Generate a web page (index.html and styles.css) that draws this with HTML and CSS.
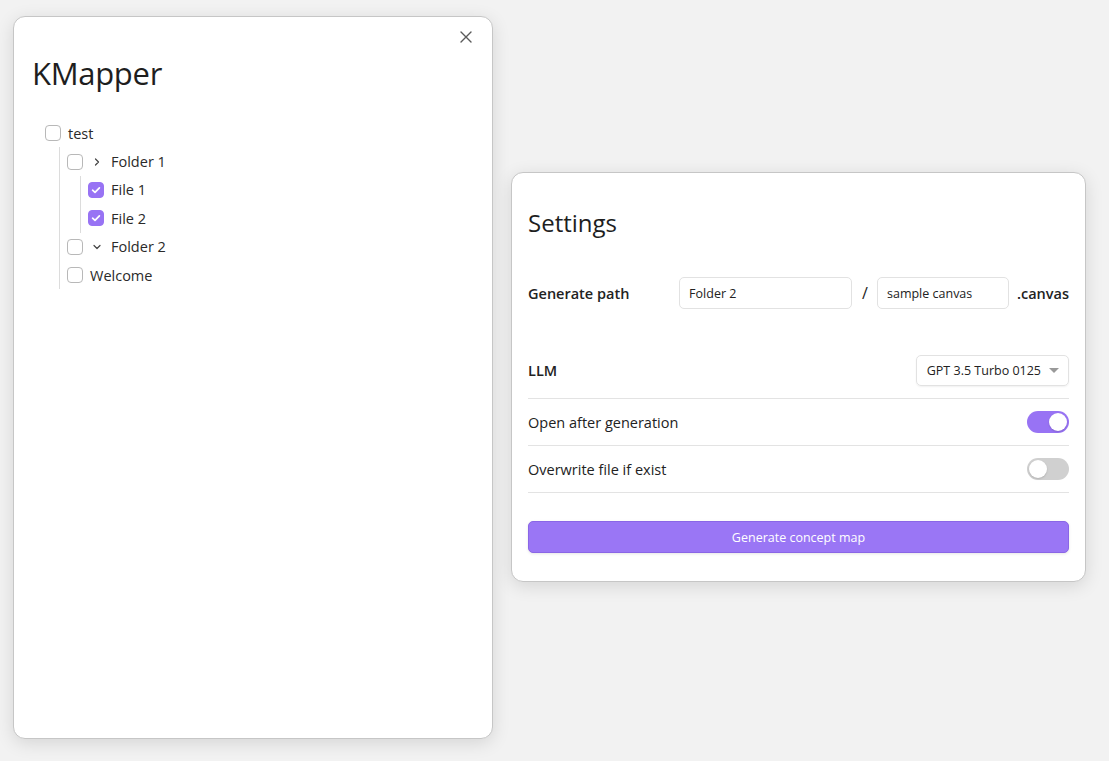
FILE: index.html
```
<!DOCTYPE html>
<html>
<head>
<meta charset="utf-8">
<title>KMapper</title>
<link rel="stylesheet" href="styles.css">
</head>
<body>
<div class="desk">
  <section class="modal modal-tree">
    <button class="close" aria-label="Close">
      <svg width="14" height="14" viewBox="0 0 14 14"><path d="M2 2 L12 12 M12 2 L2 12" stroke="#5a5a5a" stroke-width="1.4" fill="none" stroke-linecap="round"/></svg>
    </button>
    <h1 class="title">KMapper</h1>
    <div class="tree">
      <div class="row"><span class="cb"></span><span class="label">test</span></div>
      <div class="children">
        <div class="row"><span class="cb"></span><span class="chev"><svg width="10" height="10" viewBox="0 0 10 10"><path d="M3.5 2 L6.5 5 L3.5 8" stroke="#444" stroke-width="1.2" fill="none" stroke-linecap="round" stroke-linejoin="round"/></svg></span><span class="label">Folder 1</span></div>
        <div class="children">
          <div class="row"><span class="cb on"><svg width="12" height="12" viewBox="0 0 12 12"><path d="M2.6 6.2 L5 8.4 L9.4 3.8" stroke="#fff" stroke-width="1.7" fill="none" stroke-linecap="round" stroke-linejoin="round"/></svg></span><span class="label">File 1</span></div>
          <div class="row"><span class="cb on"><svg width="12" height="12" viewBox="0 0 12 12"><path d="M2.6 6.2 L5 8.4 L9.4 3.8" stroke="#fff" stroke-width="1.7" fill="none" stroke-linecap="round" stroke-linejoin="round"/></svg></span><span class="label">File 2</span></div>
        </div>
        <div class="row"><span class="cb"></span><span class="chev"><svg width="10" height="10" viewBox="0 0 10 10"><path d="M2 3.5 L5 6.5 L8 3.5" stroke="#444" stroke-width="1.2" fill="none" stroke-linecap="round" stroke-linejoin="round"/></svg></span><span class="label">Folder 2</span></div>
        <div class="row"><span class="cb"></span><span class="label">Welcome</span></div>
      </div>
    </div>
  </section>

  <section class="modal modal-settings">
    <h2 class="settings-title">Settings</h2>
    <div class="path-row">
      <span class="strong-label">Generate path</span>
      <div class="path-fields">
        <input class="field field-folder" type="text" value="Folder 2">
        <span class="slash">/</span>
        <input class="field field-name" type="text" value="sample canvas">
        <span class="ext">.canvas</span>
      </div>
    </div>
    <div class="setting first">
      <span class="strong-label">LLM</span>
      <div class="dropdown"><span>GPT 3.5 Turbo 0125</span><span class="caret"></span></div>
    </div>
    <div class="setting">
      <span class="name">Open after generation</span>
      <span class="toggle on"><span class="knob"></span></span>
    </div>
    <div class="setting last">
      <span class="name">Overwrite file if exist</span>
      <span class="toggle"><span class="knob"></span></span>
    </div>
    <button class="cta">Generate concept map</button>
  </section>
</div>
</body>
</html>
```
FILE: styles.css
```
* { box-sizing: border-box; }
html, body { margin: 0; padding: 0; }
body {
  background: #f2f2f2;
  font-family: "Open Sans", "Noto Sans", sans-serif;
  color: #222;
  width: 1109px;
  height: 761px;
  overflow: hidden;
}
.desk {
  display: flex;
  align-items: flex-start;
  padding: 16px 0 0 13px;
  gap: 18px;
}
.modal {
  background: #fff;
  border: 1px solid #c6c6c6;
  border-radius: 12px;
  box-shadow: 0 4px 18px rgba(0,0,0,0.12);
  position: relative;
}
.modal-tree {
  width: 480px;
  height: 723px;
  padding: 34px 18px 18px 18px;
}
.close {
  position: absolute;
  top: 8px;
  right: 14px;
  width: 24px;
  height: 24px;
  padding: 0;
  border: 0;
  background: transparent;
  display: flex;
  align-items: center;
  justify-content: center;
}
.title {
  margin: 0 0 24px 0;
  font-size: 31px;
  font-weight: 500;
  line-height: 44px;
  color: #1e1e1e;
  letter-spacing: -0.3px;
}
.tree {
  padding-left: 13px;
  font-size: 14.5px;
}
.row {
  display: flex;
  align-items: center;
  height: 28.4px;
}
.cb {
  width: 16px;
  height: 16px;
  border: 1px solid #b8b8b8;
  border-radius: 4px;
  margin-right: 7px;
  flex: none;
  display: flex;
  align-items: center;
  justify-content: center;
  background: #fff;
}
.cb.on {
  background: #9873f4;
  border-color: #9873f4;
}
.chev {
  width: 12px;
  display: flex;
  align-items: center;
  justify-content: center;
  margin-right: 8px;
  margin-left: 1px;
}
.label { color: #2a2a2a; }
.children {
  margin-left: 14px;
  border-left: 1px solid #dcdcdc;
  padding-left: 7px;
}
.children .children { margin-left: 13px; }

.modal-settings {
  width: 575px;
  margin-top: 156px;
  padding: 28px 16px 28px 16px;
}
.settings-title {
  margin: 0;
  font-size: 24px;
  font-weight: 500;
  line-height: 44px;
  color: #1e1e1e;
}
.path-row {
  display: flex;
  align-items: center;
  justify-content: space-between;
  margin-top: 32px;
  margin-bottom: 34px;
}
.strong-label {
  font-weight: 600;
  font-size: 14.5px;
  color: #222;
}
.path-fields {
  display: flex;
  align-items: center;
}
.field {
  height: 32px;
  border: 1px solid #e2e2e2;
  border-radius: 5px;
  font-family: inherit;
  font-size: 12.5px;
  color: #222;
  padding: 0 9px;
  background: #fff;
  outline: none;
}
.field-folder { width: 173px; }
.field-name { width: 132px; }
.slash {
  margin: 0 9px 0 10px;
  font-size: 16px;
  color: #222;
}
.ext {
  margin-left: 8px;
  font-weight: 600;
  font-size: 14.5px;
}
.setting {
  display: flex;
  align-items: center;
  justify-content: space-between;
  padding: 12px 0;
  border-top: 1px solid #e3e3e3;
}
.setting.first { border-top: 0; }
.setting.last { border-bottom: 1px solid #e3e3e3; }
.name { font-size: 14.5px; color: #222; }
.dropdown {
  height: 31px;
  border: 1px solid #e2e2e2;
  border-radius: 5px;
  box-shadow: 0 1px 2px rgba(0,0,0,0.06);
  display: flex;
  align-items: center;
  padding: 0 9px 0 10px;
  font-size: 12.5px;
  color: #222;
  gap: 8px;
}
.caret {
  width: 0;
  height: 0;
  border-left: 5px solid transparent;
  border-right: 5px solid transparent;
  border-top: 5px solid #999;
}
.toggle {
  width: 42px;
  height: 22px;
  border-radius: 11px;
  background: #d0d0d0;
  position: relative;
  display: block;
}
.toggle .knob {
  position: absolute;
  top: 2px;
  left: 2px;
  width: 18px;
  height: 18px;
  border-radius: 50%;
  background: #fff;
  box-shadow: 0 1px 2px rgba(0,0,0,0.15);
}
.toggle.on { background: #9873f4; }
.toggle.on .knob { left: 22px; }
.cta {
  display: block;
  width: 100%;
  margin-top: 28px;
  height: 32px;
  border: 1px solid #8a66e6;
  border-radius: 5px;
  background: #9a76f5;
  color: #fff;
  font-family: inherit;
  font-size: 12.5px;
  box-shadow: 0 1px 3px rgba(0,0,0,0.1);
}
```
